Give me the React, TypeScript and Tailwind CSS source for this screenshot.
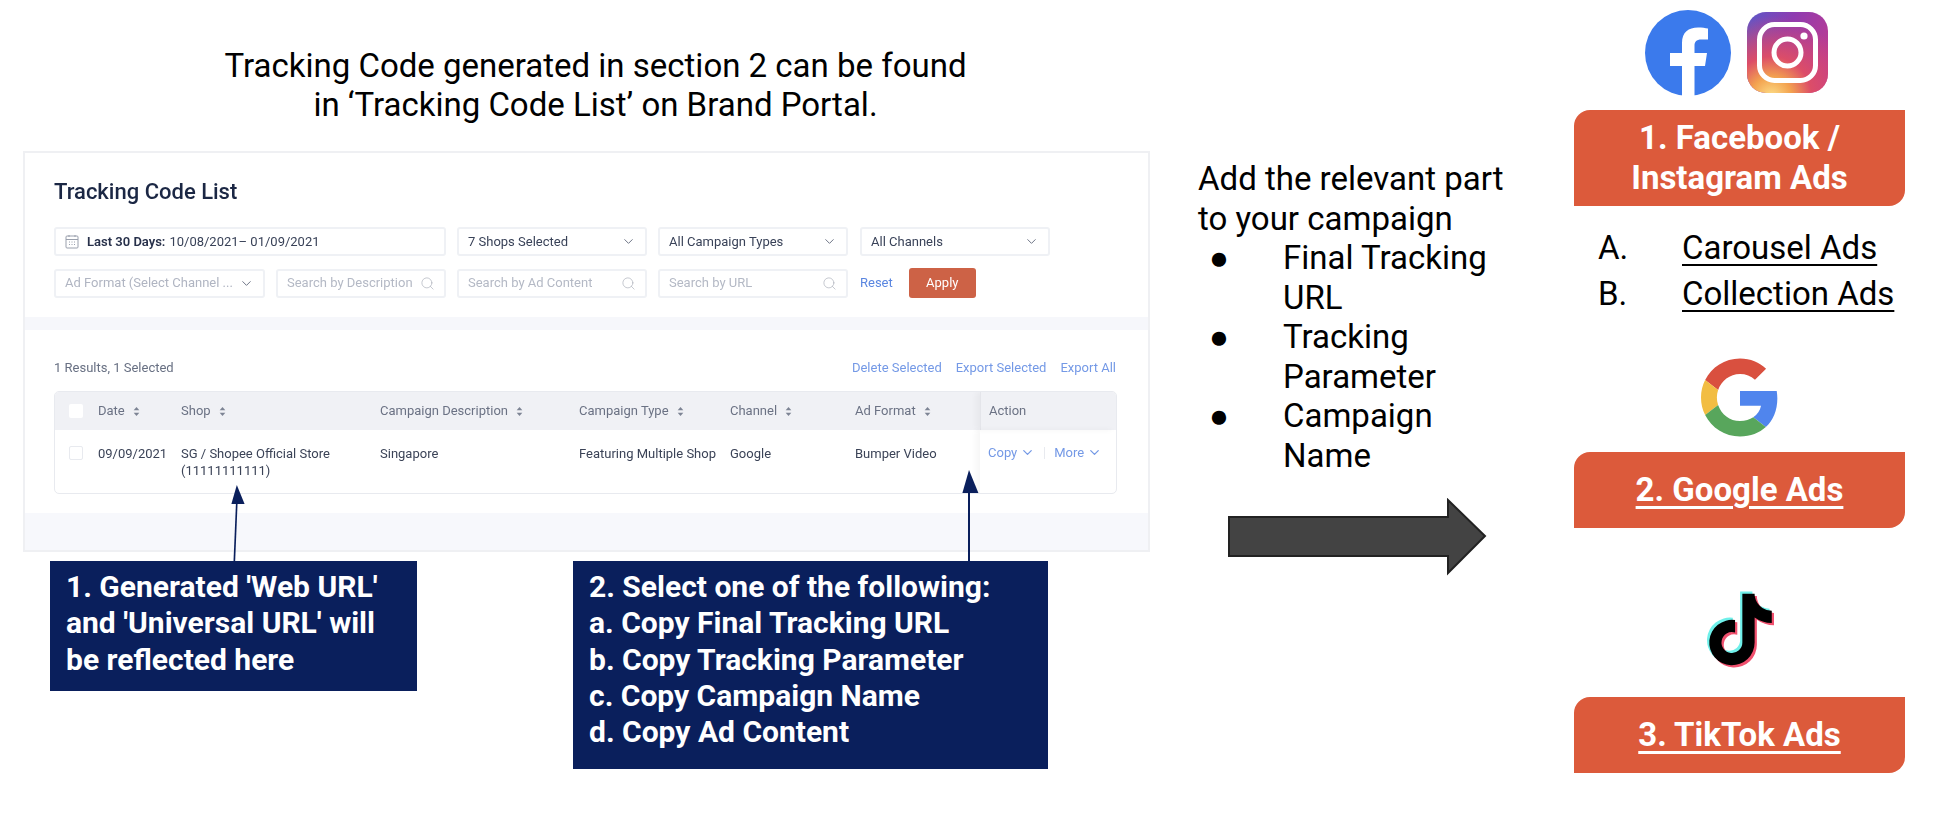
import React from "react";
import { ChevronDown, Search } from "lucide-react";

const SortIcon = () => (
  <svg width="7" height="11" viewBox="0 0 7 11" className="ml-2 shrink-0">
    <path d="M3.5 1 6.3 4.2H.7z" fill="#7d8494" />
    <path d="M3.5 10 6.3 6.8H.7z" fill="#7d8494" />
  </svg>
);

const CalendarIcon = () => (
  <svg width="14" height="15" viewBox="0 0 14 15" fill="none" stroke="#9aa0ad" strokeWidth="1" className="shrink-0">
    <rect x="1" y="2" width="12" height="12" rx="1" />
    <path d="M1 5.5h12M4 1v2M10 1v2M4 8h1M6.5 8h1M9 8h1M4 10.5h1M6.5 10.5h1M9 10.5h1" />
  </svg>
);

const FacebookLogo = () => (
  <svg viewBox="0 0 86 86" className="w-[86px] h-[86px]">
    <circle cx="43" cy="43" r="43" fill="#3b7aec" />
    <path
      d="M37 86V56H25V43H37V33C37 22 43.5 17.5 53 17.5C57 17.5 60.5 18 63 18.5V29.5H56.5C51 29.5 49.5 32 49.5 36V43H62L60 56H49.5V86Z"
      fill="#fff"
    />
  </svg>
);

const InstagramLogo = () => (
  <svg viewBox="0 0 81 81" className="w-[81px] h-[81px]">
    <defs>
      <radialGradient id="igWarm" cx="0.3" cy="1.05" r="1">
        <stop offset="0" stopColor="#fde08a" />
        <stop offset="0.25" stopColor="#f3a24f" />
        <stop offset="0.5" stopColor="#dc4d68" />
        <stop offset="1" stopColor="#dc4d68" stopOpacity="0" />
      </radialGradient>
      <linearGradient id="igBase" x1="0" y1="0" x2="1" y2="0.6">
        <stop offset="0" stopColor="#5b59c8" />
        <stop offset="0.45" stopColor="#8f3bb0" />
        <stop offset="1" stopColor="#c13b8f" />
      </linearGradient>
    </defs>
    <rect width="81" height="81" rx="19" fill="url(#igBase)" />
    <rect width="81" height="81" rx="19" fill="url(#igWarm)" />
    <rect x="12.5" y="12.5" width="56" height="56" rx="15" fill="none" stroke="#fff" strokeWidth="5" />
    <circle cx="40.5" cy="40.5" r="13.5" fill="none" stroke="#fff" strokeWidth="5" />
    <circle cx="57" cy="24" r="3.6" fill="#fff" />
  </svg>
);

const GoogleLogo = () => (
  <svg viewBox="0 0 48 48" className="w-[78px] h-[79px]">
    <path fill="#d9503f" d="M24 9.5c3.54 0 6.71 1.22 9.21 3.6l6.85-6.85C35.9 2.38 30.47 0 24 0 14.62 0 6.51 5.38 2.56 13.22l7.98 6.19C12.43 13.72 17.74 9.5 24 9.5z" />
    <path fill="#5085ed" d="M46.98 24.55c0-1.57-.15-3.09-.38-4.55H24v9.02h12.94c-.58 2.96-2.26 5.48-4.78 7.18l7.73 6c4.51-4.18 7.09-10.36 7.09-17.65z" />
    <path fill="#f2bd42" d="M10.53 28.59c-.48-1.45-.76-2.99-.76-4.59s.27-3.14.76-4.59l-7.98-6.19C.92 16.46 0 20.12 0 24c0 3.88.92 7.54 2.56 10.78l7.97-6.19z" />
    <path fill="#58a65c" d="M24 48c6.48 0 11.93-2.13 15.89-5.81l-7.73-6c-2.15 1.45-4.92 2.3-8.16 2.3-6.26 0-11.57-4.22-13.47-9.91l-7.98 6.19C6.51 42.62 14.62 48 24 48z" />
  </svg>
);

const TIKTOK_PATH =
  "M448,209.91a210.06,210.06,0,0,1-122.77-39.25V349.38A162.55,162.55,0,1,1,185,188.31V278.2a74.62,74.62,0,1,0,52.23,71.18V0l88,0a121.18,121.18,0,0,0,1.86,22.17h0A122.18,122.18,0,0,0,381,102.39a121.43,121.43,0,0,0,67,20.14Z";

const TikTokLogo = () => (
  <svg viewBox="-16 -16 480 544" className="w-[67px] h-[79px]">
    <path d={TIKTOK_PATH} fill="#6ff0ea" transform="translate(-16 -16)" />
    <path d={TIKTOK_PATH} fill="#f0506e" transform="translate(16 16)" />
    <path d={TIKTOK_PATH} fill="#000" />
  </svg>
);

const FilterBox = ({ className, children }: { className: string; children: React.ReactNode }) => (
  <div className={`h-[29px] flex items-center border-2 border-[#eff1f5] rounded-[3px] bg-white px-[9px] text-[13px] ${className}`}>
    {children}
  </div>
);

const SearchBox = ({ label, className }: { label: string; className: string }) => (
  <FilterBox className={`justify-between text-[#b4b9c5] ${className}`}>
    <span className="whitespace-nowrap overflow-hidden">{label}</span>
    <Search size={15} strokeWidth={1} className="text-[#a3a8b4] shrink-0" />
  </FilterBox>
);

const SelectBox = ({ label, className }: { label: string; className: string }) => (
  <FilterBox className={`justify-between text-[#394258] ${className}`}>
    <span className="whitespace-nowrap">{label}</span>
    <ChevronDown size={15} strokeWidth={1.6} className="text-[#6f7687] shrink-0" />
  </FilterBox>
);

const columns = ["Date", "Shop", "Campaign Description", "Campaign Type", "Channel", "Ad Format"];

const TrackingPanel = () => (
  <div className="ml-[23px] w-[1127px] h-[401px] border-2 border-[#eff0f3] bg-white flex flex-col text-[13px] blur-[0.4px]">
    <div className="px-[29px] pt-[25px] h-[164px] shrink-0">
      <h2 className="text-[22px] leading-[28px] font-medium text-[#1b2744]">Tracking Code List</h2>
      <div className="flex gap-[11px] mt-[21px]">
        <FilterBox className="w-[392px] text-[#394258]">
          <CalendarIcon />
          <span className="ml-2 font-semibold text-[#27304a]">Last 30 Days:</span>
          <span className="ml-1">10/08/2021– 01/09/2021</span>
        </FilterBox>
        <SelectBox label="7 Shops Selected" className="w-[190px]" />
        <SelectBox label="All Campaign Types" className="w-[190px]" />
        <SelectBox label="All Channels" className="w-[190px] ml-px" />
      </div>
      <div className="flex gap-[11px] mt-[12px] items-center">
        <FilterBox className="w-[211px] justify-between bg-[#f5f6fa] text-[#b0b5c2]">
          <span className="whitespace-nowrap overflow-hidden">Ad Format (Select Channel ...</span>
          <ChevronDown size={15} strokeWidth={1.6} className="text-[#6f7687] shrink-0" />
        </FilterBox>
        <SearchBox label="Search by Description" className="w-[170px]" />
        <SearchBox label="Search by Ad Content" className="w-[190px]" />
        <SearchBox label="Search by URL" className="w-[190px]" />
        <span className="text-[#5a86e0] ml-[1px]">Reset</span>
        <div className="h-[30px] w-[67px] ml-[5px] rounded-[3px] bg-[#cd6246] text-white flex items-center justify-center">
          Apply
        </div>
      </div>
    </div>
    <div className="h-[13px] bg-[#f6f7fb] shrink-0" />
    <div className="px-[29px] h-[183px] shrink-0">
      <div className="flex justify-between h-[61px] pt-[29px] pr-[3px] leading-[17px]">
        <span className="text-[#687083]">1 Results, 1 Selected</span>
        <div className="flex gap-[14px] text-[#7499e6]">
          <span>Delete Selected</span>
          <span>Export Selected</span>
          <span>Export All</span>
        </div>
      </div>
      <div className="w-[1063px] h-[103px] border border-[#e8eaef] rounded-[5px] overflow-hidden">
        <div className="grid grid-cols-[43px_83px_199px_199px_151px_125px_125px_1fr] h-[38px] bg-[#f0f1f5] items-center text-[#6b7284]">
          <div className="pl-[14px]">
            <div className="w-[14px] h-[14px] bg-white rounded-[2px]" />
          </div>
          {columns.map((col) => (
            <div key={col} className="flex items-center whitespace-nowrap">
              {col}
              <SortIcon />
            </div>
          ))}
          <div className="h-full flex items-center pl-[8px] border-l border-[#e4e5ea] shadow-[-4px_0_6px_rgba(0,0,0,0.04)]">
            Action
          </div>
        </div>
        <div className="grid grid-cols-[43px_83px_199px_199px_151px_125px_125px_1fr] h-[65px] text-[#3b4357] leading-[17px]">
          <div className="pl-[14px] pt-[16px]">
            <div className="w-[14px] h-[14px] border border-[#e8eaef] rounded-[2px]" />
          </div>
          <div className="pt-[15px]">09/09/2021</div>
          <div className="pt-[15px]">
            SG / Shopee Official Store
            <br />
            (11111111111)
          </div>
          <div className="pt-[15px]">Singapore</div>
          <div className="pt-[15px] whitespace-nowrap">Featuring Multiple Shop</div>
          <div className="pt-[15px]">Google</div>
          <div className="pt-[15px]">Bumper Video</div>
          <div className="pt-[14px] pl-[8px] flex items-start text-[#7499e6] whitespace-nowrap shadow-[-4px_0_6px_rgba(0,0,0,0.04)]">
            <span>Copy</span>
            <ChevronDown size={15} strokeWidth={2} className="ml-[3px] mt-[1px]" />
            <span className="w-px h-[12px] bg-[#e8eaef] mx-[9px] mt-[3px]" />
            <span>More</span>
            <ChevronDown size={15} strokeWidth={2} className="ml-[3px] mt-[1px]" />
          </div>
        </div>
      </div>
    </div>
    <div className="flex-1 bg-[#f7f8fc]" />
  </div>
);

// annotation arrows sit over the screenshot and callouts
const NoteArrow = ({ className, x1, y1 }: { className: string; x1: number; y1: number }) => (
  <svg className={`absolute ${className}`} width="20" height="92" viewBox="0 0 20 92" fill="#0a1f5c">
    <path d="M8.6 0 2 23H18Z" transform={`translate(${x1 - 8.6} 0)`} />
    <line x1={x1} y1="20" x2={y1} y2="92" stroke="#0a1f5c" strokeWidth="2" />
  </svg>
);

const Callout = ({ lines, className }: { lines: string[]; className: string }) => (
  <div className={`bg-[#0a1f5c] text-white font-bold text-[30px] leading-[36.3px] pt-[8px] pl-[16px] ${className}`}>
    {lines.map((line) => (
      <div key={line} className="whitespace-nowrap">
        {line}
      </div>
    ))}
  </div>
);

const AdCard = ({ className, children }: { className: string; children: React.ReactNode }) => (
  <div className={`w-[331px] bg-[#dc5a3b] rounded-tl-[16px] rounded-br-[16px] text-white font-bold text-[33px] leading-[40px] flex items-center justify-center text-center ${className}`}>
    {children}
  </div>
);

export default function App() {
  return (
    <div className="w-[1944px] h-[820px] bg-white flex font-['Roboto',sans-serif] text-black overflow-hidden">
      <div className="relative w-[1198px] shrink-0">
        <div className="pt-[46px] pb-[27px] w-[1191px] text-center text-[33px] leading-[39px]">
          <div>Tracking Code generated in section 2 can be found</div>
          <div>in ‘Tracking Code List’ on Brand Portal.</div>
        </div>
        <TrackingPanel />
        <div className="flex mt-[9px] ml-[50px] gap-[156px]">
          <Callout
            className="w-[367px] h-[130px]"
            lines={["1. Generated 'Web URL'", "and 'Universal URL' will", "be reflected here"]}
          />
          <Callout
            className="w-[475px] h-[208px]"
            lines={[
              "2. Select one of the following:",
              "a. Copy Final Tracking URL",
              "b. Copy Tracking Parameter",
              "c. Copy Campaign Name",
              "d. Copy Ad Content",
            ]}
          />
        </div>
        <NoteArrow className="left-[226px] top-[470px] translate-y-[15px] h-[76px]" x1={11} y1={8} />
        <NoteArrow className="left-[959px] top-[470px]" x1={10} y1={10} />
      </div>

      <div className="w-[320px] shrink-0 pt-[159px] text-[33px] leading-[39.5px]">
        <div className="whitespace-nowrap">Add the relevant part</div>
        <div className="whitespace-nowrap">to your campaign</div>
        <ul>
          {["Final Tracking URL", "Tracking Parameter", "Campaign Name"].map((item) => (
            <li key={item} className="flex">
              <span className="w-[85px] pl-[11px] shrink-0">●</span>
              <span className="w-[215px]">{item}</span>
            </li>
          ))}
        </ul>
        <svg width="260" height="78" viewBox="0 0 260 78" className="mt-[23px] ml-[30px] block">
          <path d="M1 19H220V2L257 38L220 75V58H1Z" fill="#434343" stroke="#222" strokeWidth="2" />
        </svg>
      </div>

      <div className="pl-[56px] w-[426px] shrink-0">
        <div className="flex pl-[71px] pt-[10px] gap-[16px] items-start h-[110px]">
          <FacebookLogo />
          <div className="pt-[2px]">
            <InstagramLogo />
          </div>
        </div>
        <AdCard className="h-[96px]">
          <span>
            1. Facebook /
            <br />
            Instagram Ads
          </span>
        </AdCard>
        <div className="pt-[19px] text-[33px] leading-[46px]">
          <div className="flex pl-[24px]">
            <span className="w-[84px]">A.</span>
            <span className="underline underline-offset-[5px] decoration-2">Carousel Ads</span>
          </div>
          <div className="flex pl-[24px]">
            <span className="w-[84px]">B.</span>
            <span className="underline underline-offset-[5px] decoration-2">Collection Ads</span>
          </div>
        </div>
        <div className="flex justify-center pt-[41px] pb-[15px] w-[331px]">
          <GoogleLogo />
        </div>
        <AdCard className="h-[76px] underline underline-offset-[5px]">2. Google Ads</AdCard>
        <div className="flex justify-center pt-[62px] pb-[28px] w-[331px] pl-[2px]">
          <TikTokLogo />
        </div>
        <AdCard className="h-[76px] underline underline-offset-[5px]">3. TikTok Ads</AdCard>
      </div>
    </div>
  );
}
